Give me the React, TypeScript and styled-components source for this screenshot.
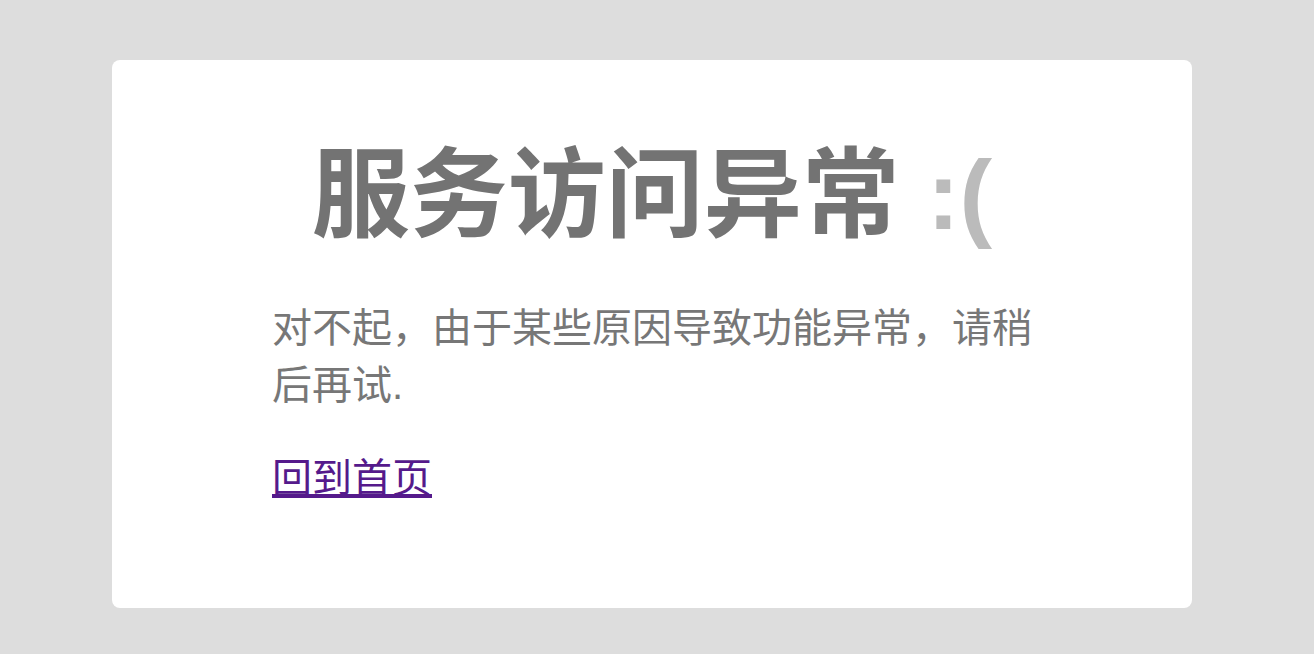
import React from 'react'
import styled, { createGlobalStyle } from 'styled-components'

const GlobalStyle = createGlobalStyle`
  html, body {
    margin: 0;
    padding: 0;
    background: #dddddd;
  }
  body {
    font-family: "Liberation Sans", "Noto Sans CJK SC", sans-serif;
  }
`

const Page = styled.div`
  min-height: 654px;
  padding: 60px 0 0 112px;
  box-sizing: border-box;
`

const Card = styled.div`
  width: 1080px;
  height: 548px;
  box-sizing: border-box;
  background: #ffffff;
  border-radius: 8px;
  padding: 70px 160px 0;
`

const Title = styled.h1`
  margin: 0 0 40px;
  text-align: center;
  font-size: 98px;
  line-height: 130px;
  font-weight: bold;
  color: #737373;
`

const Face = styled.span`
  color: #bbbbbb;
`

const Message = styled.p`
  margin: 0 0 36px;
  font-size: 40px;
  line-height: 57px;
  color: #777777;
`

const HomeLink = styled.a`
  font-size: 40px;
  line-height: 57px;
  color: #551a8b;
  text-decoration: underline;
`

export default function App() {
  return (
    <Page>
      <GlobalStyle />
      <Card>
        <Title>
          服务访问异常 <Face>:(</Face>
        </Title>
        <Message>对不起，由于某些原因导致功能异常，请稍后再试.</Message>
        <HomeLink href="#">回到首页</HomeLink>
      </Card>
    </Page>
  )
}
